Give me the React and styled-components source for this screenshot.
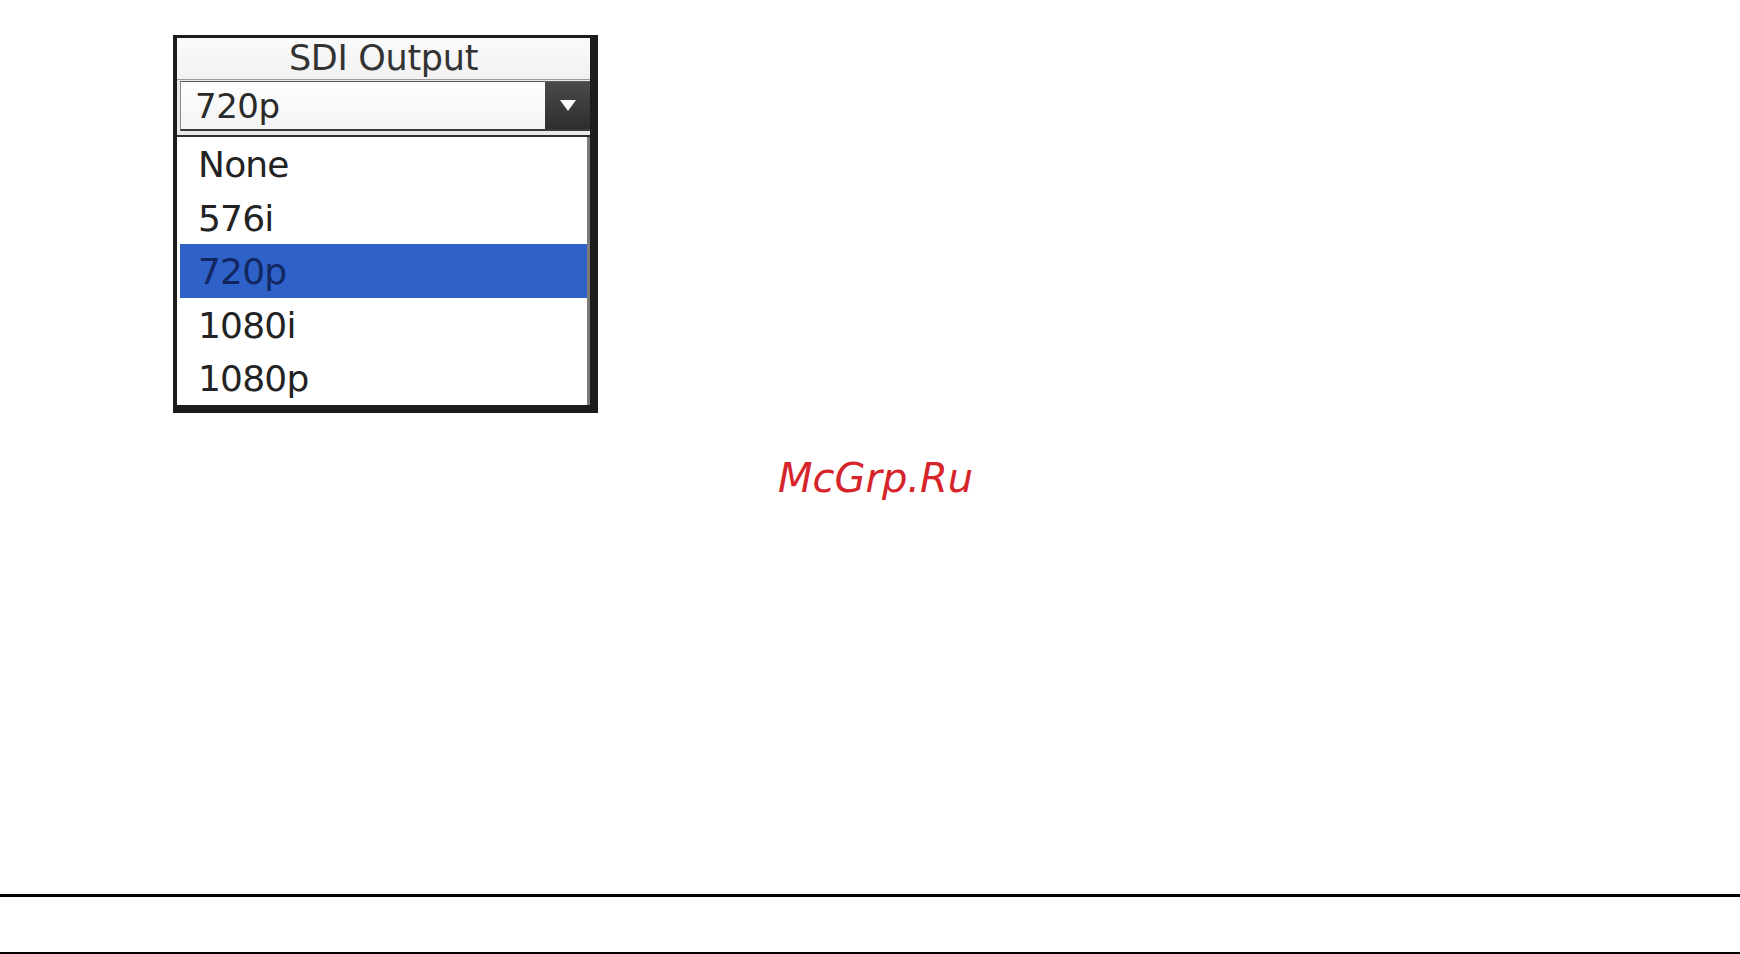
import React from "react";
import styled, { createGlobalStyle } from "styled-components";

const Global = createGlobalStyle`
  html, body { margin: 0; padding: 0; background: #ffffff; }
  body { font-family: "DejaVu Sans", "Liberation Sans", sans-serif; }
`;

const Page = styled.div`
  width: 1740px;
  height: 954px;
  display: flex;
  flex-direction: column;
  background: #ffffff;
  overflow: hidden;
`;

const Widget = styled.div`
  margin: 35px 0 0 173px;
  width: 425px;
  box-sizing: border-box;
  border-style: solid;
  border-color: #1c1c1c;
  border-width: 3px 8px 8px 4px;
  display: flex;
  flex-direction: column;
  background: #ffffff;
`;

const Title = styled.div`
  height: 42px;
  box-sizing: border-box;
  border-bottom: 1px solid #9a9a9a;
  background: linear-gradient(#fbfbfb, #f1f1f1);
  text-align: center;
  font-size: 35px;
  line-height: 40px;
  letter-spacing: -0.3px;
  color: #333333;
  white-space: nowrap;
`;

const SelectRow = styled.div`
  height: 57px;
  box-sizing: border-box;
  padding: 1px 0 4px 3px;
  display: flex;
  background: #e9e9e9;
  border-bottom: 2px solid #2e2e2e;
`;

const SelectBox = styled.div`
  flex: 1;
  display: flex;
  border-top: 1px solid #5a5a5a;
  border-left: 1px solid #8a8a8a;
  border-bottom: 2px solid #3a3a3a;
  background: linear-gradient(#ffffff, #f3f3f3);
`;

const SelectValue = styled.div`
  flex: 1;
  padding-left: 14px;
  font-size: 34px;
  line-height: 48px;
  letter-spacing: -0.5px;
  color: #2a2a2a;
`;

const DropButton = styled.div`
  width: 45px;
  display: flex;
  align-items: center;
  justify-content: center;
  background: linear-gradient(#4a4a4a, #2e2e2e);
`;

const List = styled.div`
  display: flex;
  flex-direction: column;
  margin-left: 3px;
  border-right: 3px solid #7a7a7a;
  background: #ffffff;
`;

const Row = styled.div`
  height: 53.6px;
  box-sizing: border-box;
  padding: 3px 0 0 18px;
  font-size: 36px;
  line-height: 50.6px;
  letter-spacing: -0.8px;
  color: ${(p) => (p.$selected ? "#122660" : "#232323")};
  background: ${(p) => (p.$selected ? "#2f62c9" : "transparent")};
`;

const Watermark = styled.div`
  margin: 42px 0 0 778px;
  font-family: "DejaVu Sans", sans-serif;
  font-style: italic;
  font-size: 40px;
  line-height: 1.164;
  color: #d6242b;
  white-space: nowrap;
`;

const Footer = styled.div`
  margin-top: auto;
  height: 60px;
  box-sizing: border-box;
  border-top: 3px solid #000000;
  border-bottom: 2px solid #000000;
`;

const options = ["None", "576i", "720p", "1080i", "1080p"];

export default function App() {
  const selected = "720p";
  return (
    <Page>
      <Global />
      <Widget>
        <Title>SDI Output</Title>
        <SelectRow>
          <SelectBox>
            <SelectValue>{selected}</SelectValue>
            <DropButton>
              <svg width="18" height="13" viewBox="0 0 18 13">
                <path d="M1 1 L17 1 L9 12 Z" fill="#ffffff" />
              </svg>
            </DropButton>
          </SelectBox>
        </SelectRow>
        <List>
          {options.map((o) => (
            <Row key={o} $selected={o === selected}>
              {o}
            </Row>
          ))}
        </List>
      </Widget>
      <Watermark>McGrp.Ru</Watermark>
      <Footer />
    </Page>
  );
}
